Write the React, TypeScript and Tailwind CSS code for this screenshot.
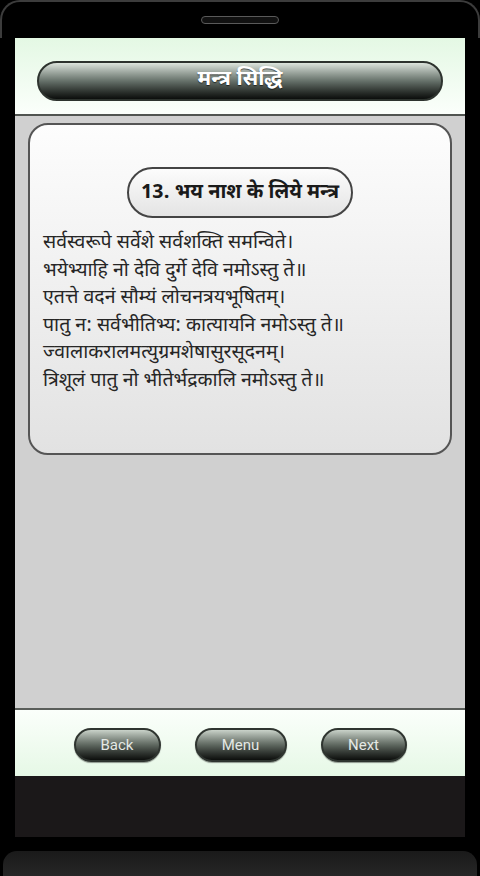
import React from "react";

const deva = { fontFamily: '"Noto Sans Devanagari", "Noto Sans", "Lohit Devanagari", "Nirmala UI", sans-serif' };

const lines = [
  "सर्वस्वरूपे सर्वेशे सर्वशक्ति समन्विते।",
  "भयेभ्याहि नो देवि दुर्गे देवि नमोऽस्तु ते॥",
  "एतत्ते वदनं सौम्यं लोचनत्रयभूषितम्।",
  "पातु न: सर्वभीतिभ्य: कात्यायनि नमोऽस्तु ते॥",
  "ज्वालाकरालमत्युग्रमशेषासुरसूदनम्।",
  "त्रिशूलं पातु नो भीतेर्भद्रकालि नमोऽस्तु ते॥",
];

function NavButton({ label, w }: { label: string; w: string }) {
  return (
    <div
      className={`${w} h-[34px] rounded-full border-2 border-[#2f3530] bg-gradient-to-b from-[#c9d2c9] via-[#5e675f] to-[#0d0f0d] flex items-center justify-center text-[15px] text-[#e4e8e4] shadow-[0_1px_1px_rgba(0,0,0,0.4)]`}
      style={{ fontFamily: 'Roboto, "Open Sans", sans-serif' }}
    >
      {label}
    </div>
  );
}

export default function App() {
  return (
    <div className="w-[480px] h-[876px] bg-black overflow-hidden flex flex-col">
      {/* top bezel */}
      <div className="h-[38px] rounded-t-[20px] border-t-2 border-x-2 border-[#3c3c3c] bg-black flex items-start justify-center pt-[14px]">
        <div className="w-[78px] h-[8px] rounded-full border border-[#5a5a5a] bg-[#111]" />
      </div>
      {/* screen row */}
      <div className="flex px-[15px]">
        <div className="w-[450px] h-[799px] flex flex-col">
          {/* header */}
          <div className="h-[76px] bg-gradient-to-b from-[#e4f8e4] to-[#fbfffb] px-[22px] pt-[23px]">
            <div
              className="h-[40px] rounded-full border-2 border-[#2d332e] bg-gradient-to-b from-[#dde5dd] via-[#66716a] to-[#0c0e0c] flex items-center justify-center text-white text-[21px] font-bold"
              style={{ ...deva, textShadow: "0 1px 1px rgba(0,0,0,0.6)" }}
            >
              मन्त्र सिद्धि
            </div>
          </div>
          <div className="h-[2px] bg-[#505450]" />
          {/* content */}
          <div className="flex-1 bg-[#d0d0d0] px-[13px] pt-[7px]">
            <div className="h-[332px] rounded-[20px] border-2 border-[#555] bg-gradient-to-b from-[#fdfdfd] to-[#e2e2e2] pt-[42px] px-[13px]">
              <div className="flex justify-center">
                <div
                  className="w-[226px] h-[51px] rounded-full border-2 border-[#444] bg-gradient-to-b from-[#fcfcfc] to-[#e4e4e4] flex items-center justify-center text-[20px] font-bold text-[#1a1a1a] whitespace-nowrap"
                  style={deva}
                >
                  13. भय नाश के लिये मन्त्र
                </div>
              </div>
              <div className="mt-[12px] text-[19.5px] leading-[27.6px] text-[#262626] whitespace-nowrap" style={deva}>
                {lines.map((l) => (
                  <div key={l}>{l}</div>
                ))}
              </div>
            </div>
          </div>
          <div className="h-[2px] bg-[#5a5e5a]" />
          {/* footer */}
          <div className="h-[66px] bg-gradient-to-b from-[#fbfffb] to-[#e6f8e6] flex justify-center gap-[34px] pt-[18px]">
            <NavButton label="Back" w="w-[87px]" />
            <NavButton label="Menu" w="w-[92px]" />
            <NavButton label="Next" w="w-[86px]" />
          </div>
          <div className="h-[61px] bg-[#1b1819]" />
        </div>
      </div>
      {/* bottom */}
      <div className="h-[14px] bg-black" />
      <div className="flex-1 mx-[3px] rounded-t-[14px] bg-gradient-to-b from-[#1a1a1a] to-[#262626]" />
    </div>
  );
}
